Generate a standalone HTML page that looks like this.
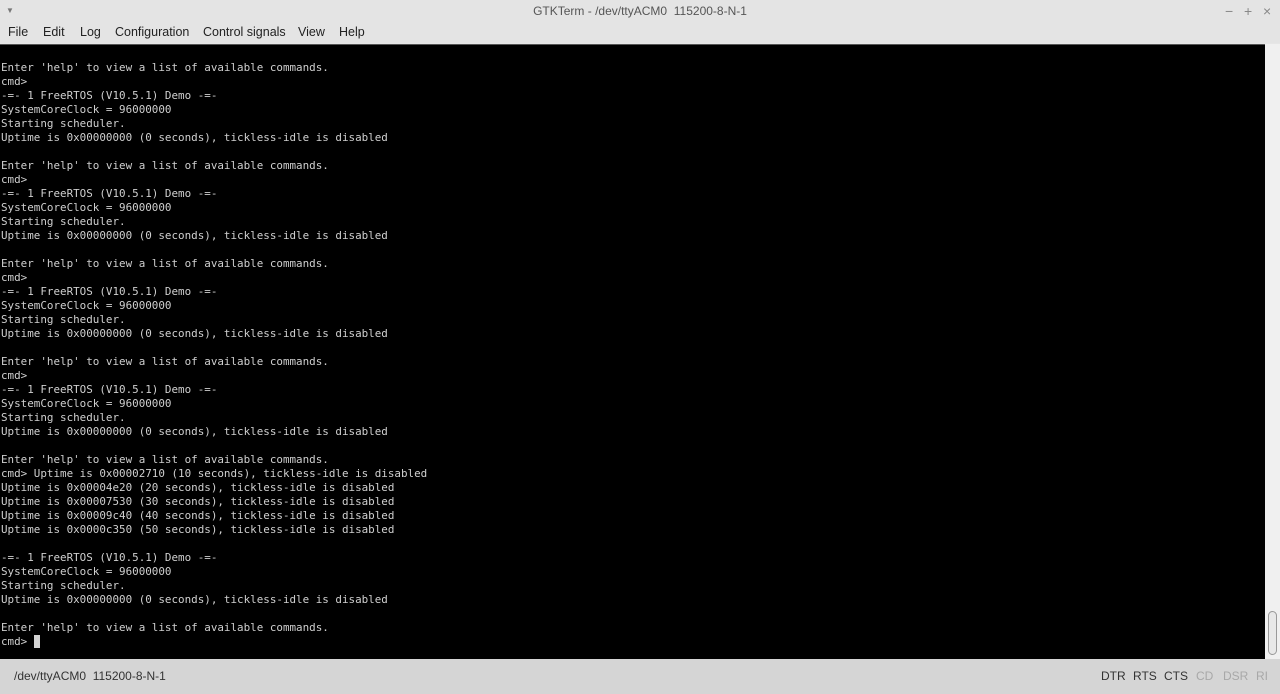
<!DOCTYPE html>
<html><head><style>
body{margin:0;width:1280px;height:694px;overflow:hidden;background:#e6e6e6;font-family:"Liberation Sans",sans-serif;position:relative}
#title{position:absolute;left:0;top:0;width:1280px;height:22px;background:#e4e4e4;text-align:center;font-size:12px;line-height:22px;color:#555}
#menu{position:absolute;left:0;top:22px;width:1280px;height:21px;background:#e4e4e4;font-size:12.5px;color:#222;line-height:21px}
#menu span{position:absolute;top:0}
#term{position:absolute;left:0;top:44px;width:1265px;height:615px;background:#000;border-top:1px solid #555}
#term pre{margin:0;padding:0;font-family:"DejaVu Sans Mono","Liberation Mono",monospace;font-size:10.9px;line-height:14px;color:#cfcfcf;position:absolute;left:1px;top:2px}
#sb{position:absolute;left:1265px;top:44px;width:15px;height:615px;background:#f0f0f0}
#thumb{position:absolute;left:1268px;top:611px;width:9px;height:44px;border:1px solid #999;border-radius:5px;background:#e8e8e8;box-sizing:border-box}
#status{position:absolute;left:0;top:659px;width:1280px;height:35px;background:#d5d5d5;font-size:12px;line-height:35px;color:#333}
#status span{position:absolute;top:0}
.dim{color:#a8a8a8}
.cur{background:#d3d3d3;color:#000}
</style></head><body>
<div id="title">GTKTerm - /dev/ttyACM0&nbsp; 115200-8-N-1
<span style="position:absolute;left:6px;top:0;font-size:8px;color:#777">▼</span>
<span style="position:absolute;left:1225px;top:0;font-size:14px;color:#888">−</span>
<span style="position:absolute;left:1244px;top:0;font-size:14px;color:#888">+</span>
<span style="position:absolute;left:1263px;top:0;font-size:14px;color:#888">×</span>
</div>
<div id="menu"><span style="left:8px">File</span><span style="left:43px">Edit</span><span style="left:80px">Log</span><span style="left:115px">Configuration</span><span style="left:203px">Control signals</span><span style="left:298px">View</span><span style="left:339px">Help</span></div>
<div id="term"><pre>

Enter 'help' to view a list of available commands.
cmd&gt;
-=- 1 FreeRTOS (V10.5.1) Demo -=-
SystemCoreClock = 96000000
Starting scheduler.
Uptime is 0x00000000 (0 seconds), tickless-idle is disabled

Enter 'help' to view a list of available commands.
cmd&gt;
-=- 1 FreeRTOS (V10.5.1) Demo -=-
SystemCoreClock = 96000000
Starting scheduler.
Uptime is 0x00000000 (0 seconds), tickless-idle is disabled

Enter 'help' to view a list of available commands.
cmd&gt;
-=- 1 FreeRTOS (V10.5.1) Demo -=-
SystemCoreClock = 96000000
Starting scheduler.
Uptime is 0x00000000 (0 seconds), tickless-idle is disabled

Enter 'help' to view a list of available commands.
cmd&gt;
-=- 1 FreeRTOS (V10.5.1) Demo -=-
SystemCoreClock = 96000000
Starting scheduler.
Uptime is 0x00000000 (0 seconds), tickless-idle is disabled

Enter 'help' to view a list of available commands.
cmd&gt; Uptime is 0x00002710 (10 seconds), tickless-idle is disabled
Uptime is 0x00004e20 (20 seconds), tickless-idle is disabled
Uptime is 0x00007530 (30 seconds), tickless-idle is disabled
Uptime is 0x00009c40 (40 seconds), tickless-idle is disabled
Uptime is 0x0000c350 (50 seconds), tickless-idle is disabled

-=- 1 FreeRTOS (V10.5.1) Demo -=-
SystemCoreClock = 96000000
Starting scheduler.
Uptime is 0x00000000 (0 seconds), tickless-idle is disabled

Enter 'help' to view a list of available commands.
cmd&gt; <span class="cur"> </span></pre></div>
<div id="sb"></div><div id="thumb"></div>
<div id="status"><span style="left:14px">/dev/ttyACM0&nbsp; 115200-8-N-1</span>
<span style="left:1101px">DTR</span><span style="left:1133px">RTS</span><span style="left:1164px">CTS</span><span class="dim" style="left:1196px">CD</span><span class="dim" style="left:1223px">DSR</span><span class="dim" style="left:1256px">RI</span></div>
</body></html>
